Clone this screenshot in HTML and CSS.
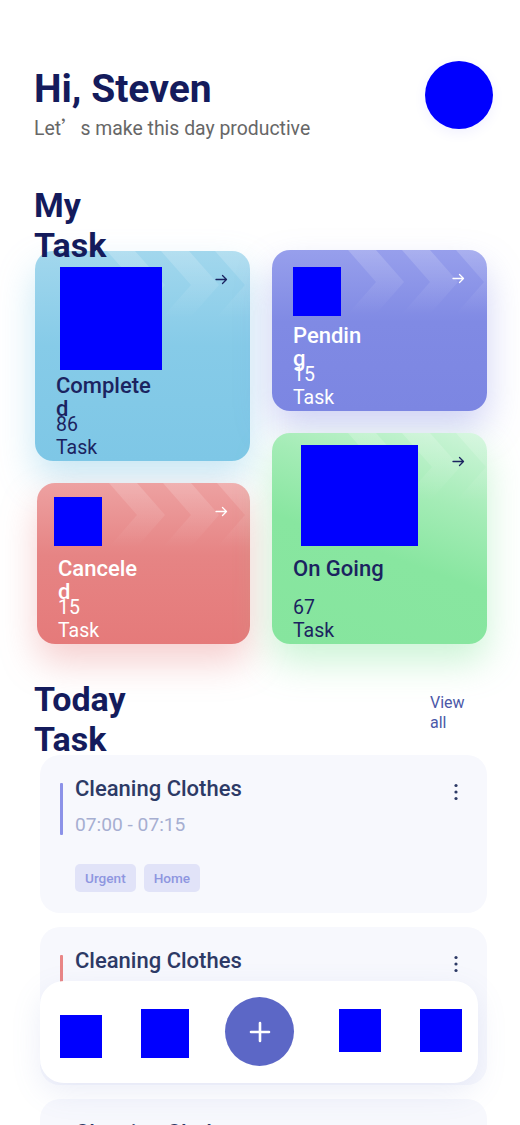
FILE: index.html
```html
<!DOCTYPE html>
<html lang="en">
<head>
<meta charset="utf-8">
<title>Tasks</title>
<link rel="stylesheet" href="styles.css">
</head>
<body>
<div class="page">
  <header class="top">
    <div class="greet">
      <h1 class="hello">Hi, Steven</h1>
      <p class="sub">Let<span class="cjk">’</span>s make this day productive</p>
    </div>
    <div class="avatar"></div>
  </header>

  <h2 class="section-title">My Task</h2>

  <div class="cards">
    <div class="col">
      <div class="card c-complete">
        <svg class="chev" width="215" height="130" viewBox="0 0 215 130"><defs><linearGradient id="g1" x1="0" y1="0" x2="0" y2="1"><stop offset="0" stop-color="#fff" stop-opacity=".2"/><stop offset="1" stop-color="#fff" stop-opacity="0"/></linearGradient></defs><polygon points="72,0 100,0 130,34 100,68 72,68 102,34" fill="url(#g1)"/><polygon points="126,0 154,0 184,34 154,68 126,68 156,34" fill="url(#g1)"/><polygon points="180,0 215,0 215,68 180,68 210,34" fill="url(#g1)"/></svg>
        <svg class="arrow" width="13" height="11" viewBox="0 0 13 11"><path d="M1 5.5h10.5M7.5 1.5l4 4-4 4" fill="none" stroke="currentColor" stroke-width="1.3" stroke-linecap="round" stroke-linejoin="round"/></svg>
        <div class="card-icon"></div>
        <div class="card-text">
          <div class="card-title">Completed</div>
          <div class="card-count">86</div>
          <div class="card-unit">Task</div>
        </div>
      </div>
      <div class="card c-cancel">
        <svg class="chev" width="215" height="130" viewBox="0 0 215 130"><defs><linearGradient id="g3" x1="0" y1="0" x2="0" y2="1"><stop offset="0" stop-color="#fff" stop-opacity=".18"/><stop offset="1" stop-color="#fff" stop-opacity="0"/></linearGradient></defs><polygon points="72,0 100,0 128,32 100,64 72,64 100,32" fill="url(#g3)"/><polygon points="126,0 154,0 182,32 154,64 126,64 154,32" fill="url(#g3)"/><polygon points="180,0 215,0 215,64 180,64 208,32" fill="url(#g3)"/></svg>
        <svg class="arrow" width="13" height="11" viewBox="0 0 13 11"><path d="M1 5.5h10.5M7.5 1.5l4 4-4 4" fill="none" stroke="currentColor" stroke-width="1.3" stroke-linecap="round" stroke-linejoin="round"/></svg>
        <div class="card-icon"></div>
        <div class="card-text">
          <div class="card-title">Canceled</div>
          <div class="card-count">15</div>
          <div class="card-unit">Task</div>
        </div>
      </div>
    </div>
    <div class="col">
      <div class="card c-pending">
        <svg class="chev" width="215" height="130" viewBox="0 0 215 130"><defs><linearGradient id="g2" x1="0" y1="0" x2="0" y2="1"><stop offset="0" stop-color="#fff" stop-opacity=".18"/><stop offset="1" stop-color="#fff" stop-opacity="0"/></linearGradient></defs><polygon points="76,0 104,0 132,32 104,64 76,64 104,32" fill="url(#g2)"/><polygon points="130,0 158,0 186,32 158,64 130,64 158,32" fill="url(#g2)"/><polygon points="184,0 215,0 215,64 184,64 212,32" fill="url(#g2)"/></svg>
        <svg class="arrow" width="13" height="11" viewBox="0 0 13 11"><path d="M1 5.5h10.5M7.5 1.5l4 4-4 4" fill="none" stroke="currentColor" stroke-width="1.3" stroke-linecap="round" stroke-linejoin="round"/></svg>
        <div class="card-icon"></div>
        <div class="card-text">
          <div class="card-title">Pending</div>
          <div class="card-count">15</div>
          <div class="card-unit">Task</div>
        </div>
      </div>
      <div class="card c-ongoing">
        <svg class="chev" width="215" height="130" viewBox="0 0 215 130"><defs><linearGradient id="g4" x1="0" y1="0" x2="0" y2="1"><stop offset="0" stop-color="#fff" stop-opacity=".2"/><stop offset="1" stop-color="#fff" stop-opacity="0"/></linearGradient></defs><polygon points="76,0 104,0 134,34 104,68 76,68 106,34" fill="url(#g4)"/><polygon points="130,0 158,0 188,34 158,68 130,68 160,34" fill="url(#g4)"/><polygon points="184,0 215,0 215,68 184,68 214,34" fill="url(#g4)"/></svg>
        <svg class="arrow" width="13" height="11" viewBox="0 0 13 11"><path d="M1 5.5h10.5M7.5 1.5l4 4-4 4" fill="none" stroke="currentColor" stroke-width="1.3" stroke-linecap="round" stroke-linejoin="round"/></svg>
        <div class="card-icon"></div>
        <div class="card-text">
          <div class="card-title">On Going</div>
          <div class="card-count">67</div>
          <div class="card-unit">Task</div>
        </div>
      </div>
    </div>
  </div>

  <div class="today-head">
    <h2 class="section-title">Today Task</h2>
    <a class="view-all">View all</a>
  </div>

  <div class="tasks">
    <div class="task">
      <div class="task-top">
        <div class="task-main">
          <span class="bar bar-blue"></span>
          <div class="task-info">
            <div class="task-title">Cleaning Clothes</div>
            <div class="task-time">07:00 - 07:15</div>
          </div>
        </div>
        <svg class="dots" width="4" height="18" viewBox="0 0 4 18"><circle cx="2" cy="2.5" r="1.6"/><circle cx="2" cy="9" r="1.6"/><circle cx="2" cy="15.5" r="1.6"/></svg>
      </div>
      <div class="tags"><span class="tag">Urgent</span><span class="tag">Home</span></div>
    </div>
    <div class="task">
      <div class="task-top">
        <div class="task-main">
          <span class="bar bar-red"></span>
          <div class="task-info">
            <div class="task-title">Cleaning Clothes</div>
            <div class="task-time">07:00 - 07:15</div>
          </div>
        </div>
        <svg class="dots" width="4" height="18" viewBox="0 0 4 18"><circle cx="2" cy="2.5" r="1.6"/><circle cx="2" cy="9" r="1.6"/><circle cx="2" cy="15.5" r="1.6"/></svg>
      </div>
      <div class="tags"><span class="tag">Urgent</span><span class="tag">Home</span></div>
    </div>
    <div class="task">
      <div class="task-top">
        <div class="task-main">
          <span class="bar bar-blue"></span>
          <div class="task-info">
            <div class="task-title">Cleaning Clothes</div>
            <div class="task-time">07:00 - 07:15</div>
          </div>
        </div>
        <svg class="dots" width="4" height="18" viewBox="0 0 4 18"><circle cx="2" cy="2.5" r="1.6"/><circle cx="2" cy="9" r="1.6"/><circle cx="2" cy="15.5" r="1.6"/></svg>
      </div>
      <div class="tags"><span class="tag">Urgent</span><span class="tag">Home</span></div>
    </div>
  </div>
</div>

<nav class="bottom-nav">
  <div class="nav-item n1"></div>
  <div class="nav-item n2"></div>
  <button class="fab" aria-label="Add"><svg width="22" height="22" viewBox="0 0 22 22"><path d="M11 2v18M2 11h18" stroke="#fff" stroke-width="2.6" stroke-linecap="round"/></svg></button>
  <div class="nav-item n3"></div>
  <div class="nav-item n4"></div>
</nav>
</body>
</html>
```

FILE: styles.css
```css
* { box-sizing: border-box; }

body {
  margin: 0;
  background: #ffffff;
  font-family: Roboto, "Noto Sans", Arial, sans-serif;
  color: #141b5c;
}

.page {
  padding: 61px 33px 40px 34px;
}

/* header */
.top {
  display: flex;
  justify-content: space-between;
  align-items: flex-start;
}

.greet {
  padding-top: 5px;
}

.hello {
  margin: 0;
  font-size: 39px;
  line-height: 46px;
  font-weight: 700;
  color: #141b5c;
}

.sub {
  margin: 3px 0 0;
  font-size: 19.4px;
  line-height: 24px;
  color: #676767;
}

.cjk {
  font-family: "Noto Sans CJK SC", sans-serif;
}

.avatar {
  width: 68px;
  height: 68px;
  border-radius: 50%;
  background: #0000ff;
  margin-right: -6px;
  box-shadow: 0 4px 14px rgba(0, 0, 255, 0.06);
}

/* section titles */
.section-title {
  position: relative;
  z-index: 2;
  margin: 0;
  width: 80px;
  height: 40px;
  font-size: 34px;
  line-height: 40px;
  font-weight: 700;
  color: #141b5c;
}

.page > .section-title {
  margin-top: 44px;
  margin-bottom: 26px;
}

/* task category cards */
.cards {
  display: flex;
  gap: 22px;
  align-items: flex-start;
  margin-left: 1px;
}

.col {
  display: flex;
  flex-direction: column;
  gap: 22px;
  width: 215px;
}

.card {
  position: relative;
  overflow: hidden;
  border-radius: 18px;
  display: flex;
  flex-direction: column;
  padding: 0 21px 2px;
}

.chev {
  position: absolute;
  left: 0;
  top: 0;
}

.arrow {
  position: absolute;
  top: 23px;
  right: 22px;
}

.card-icon {
  position: relative;
  background: #0000ff;
  flex: none;
}

.card-text {
  position: relative;
  margin-top: auto;
}

.card-title {
  height: 23px;
  font-size: 22px;
  line-height: 23px;
  font-weight: 500;
  word-break: break-all;
}

.card-count {
  margin-top: 16px;
  font-size: 19.5px;
  line-height: 23px;
}

.card-unit {
  font-size: 19.5px;
  line-height: 23px;
}

.c-complete {
  height: 210px;
  background: linear-gradient(180deg, #a2d7ed 0%, #86cbe8 45%, #7ec7e6 100%);
  color: #1b2360;
  box-shadow: 0 18px 36px rgba(126, 199, 230, 0.42);
}
.c-complete .card-icon { width: 102px; height: 103px; margin: 16px 0 0 4px; }
.c-complete .card-title { width: 100px; }

.c-cancel {
  height: 161px;
  width: 213px;
  margin-left: 2px;
  background: linear-gradient(180deg, #eda1a1 0%, #e68484 45%, #e57a7a 100%);
  color: #ffffff;
  box-shadow: 0 18px 36px rgba(229, 122, 122, 0.36);
}
.c-cancel .card-icon { width: 48px; height: 49px; margin: 14px 0 0 -4px; }
.c-cancel .card-title { width: 84px; }

.c-pending {
  height: 161px;
  margin-top: -1px;
  background: linear-gradient(180deg, #979fec 0%, #808ae4 45%, #7c86e2 100%);
  color: #ffffff;
  box-shadow: 0 18px 36px rgba(124, 134, 226, 0.36);
}
.c-pending .card-icon { width: 48px; height: 49px; margin: 17px 0 0 0; }
.c-pending .card-title { width: 73px; }

.c-ongoing {
  height: 211px;
  background: linear-gradient(200deg, #cff5da 0%, #a4ecb6 30%, #88e6a0 55%, #86e59e 100%);
  color: #1b2360;
  box-shadow: 0 18px 36px rgba(134, 229, 158, 0.42);
}
.c-ongoing .card-icon { width: 117px; height: 101px; margin: 12px 0 0 8px; }
.c-ongoing .card-title { width: 120px; }

/* today */
.today-head {
  display: flex;
  justify-content: space-between;
  align-items: flex-start;
  height: 40px;
  margin-top: 35px;
  margin-bottom: 36px;
}

.today-head .section-title {
  width: 100px;
}

.view-all {
  position: relative;
  z-index: 2;
  width: 50px;
  margin: 14px 7px 0 0;
  font-size: 16px;
  line-height: 20px;
  color: #4b58a8;
}

.tasks {
  display: flex;
  flex-direction: column;
  gap: 14px;
  margin-left: 6px;
}

.task {
  background: #f7f8fd;
  border-radius: 20px;
  padding: 22px 29px 21px 20px;
}

.task-top {
  display: flex;
  justify-content: space-between;
  align-items: flex-start;
}

.task-main {
  display: flex;
  align-items: flex-start;
}

.bar {
  width: 3px;
  height: 52px;
  margin-top: 6px;
  border-radius: 1px;
}
.bar-blue { background: #8c92e8; }
.bar-red { background: #e98686; }

.task-info {
  margin-left: 12px;
}

.task-title {
  font-size: 22px;
  line-height: 24px;
  font-weight: 500;
  color: #2d3a66;
}

.task-time {
  margin-top: 12px;
  font-size: 19.2px;
  line-height: 24px;
  color: #a6aed1;
}

.dots {
  margin-top: 6px;
  fill: #2d3a66;
}

.tags {
  display: flex;
  gap: 8px;
  margin-top: 27px;
  margin-left: 15px;
}

.tag {
  height: 28px;
  padding: 0 10px;
  border-radius: 5px;
  background: #e1e3f8;
  color: #8e96e0;
  font-size: 13.6px;
  font-weight: 500;
  line-height: 28px;
}

/* bottom nav (floating overlay) */
.bottom-nav {
  position: fixed;
  left: 40px;
  bottom: 42px;
  width: 438px;
  height: 102px;
  border-radius: 24px;
  background: #ffffff;
  box-shadow: 0 10px 30px rgba(110, 120, 200, 0.13);
  display: flex;
  align-items: flex-start;
  padding-left: 20px;
}

.nav-item {
  background: #0000ff;
  flex: none;
}
.n1 { width: 42px; height: 43px; margin-top: 34px; }
.n2 { width: 48px; height: 49px; margin-top: 28px; margin-left: 39px; }
.n3 { width: 42px; height: 43px; margin-top: 28px; margin-left: 45px; }
.n4 { width: 42px; height: 43px; margin-top: 28px; margin-left: 39px; }

.fab {
  width: 69px;
  height: 69px;
  margin-top: 16px;
  margin-left: 36px;
  border: 0;
  padding: 0;
  border-radius: 50%;
  background: #5c67c6;
  display: flex;
  align-items: center;
  justify-content: center;
  flex: none;
}
```
